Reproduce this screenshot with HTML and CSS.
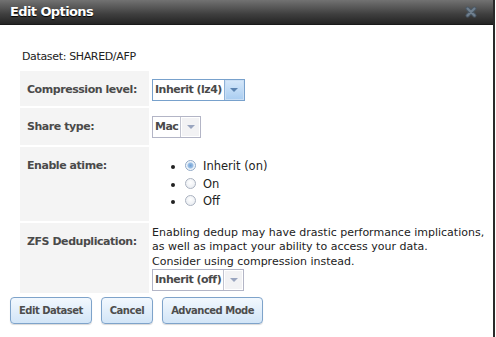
FILE: index.html
```html
<!DOCTYPE html>
<html lang="en">

<head>
  <meta charset="UTF-8">
  <meta name="viewport" content="width=device-width, initial-scale=1.0">
  <title>Edit Options</title>
  <link rel="stylesheet" href="styles.css">
</head>

<body>
  <div class="dialog">
    <div class="titlebar">
      <span class="title">Edit Options</span>
      <span class="close">
        <svg viewBox="0 0 14 14" width="14" height="14" xmlns="http://www.w3.org/2000/svg">
          <path d="M3.5 3.5 L10.5 10.5 M10.5 3.5 L3.5 10.5" stroke="#4a5866" stroke-width="4" stroke-linecap="round" />
          <path d="M3.5 3.5 L10.5 10.5 M10.5 3.5 L3.5 10.5" stroke="#71808f" stroke-width="2" stroke-linecap="round" />
        </svg>
      </span>
    </div>

    <div class="content">
      <div class="dataset">Dataset: SHARED/AFP</div>

      <div class="form">
        <div class="label">Compression level:</div>
        <div class="value row-select">
          <div class="select focused">
            <span class="select-text">Inherit (lz4)</span>
            <span class="select-arrow"></span>
          </div>
        </div>

        <div class="label">Share type:</div>
        <div class="value row-select">
          <div class="select">
            <span class="select-text">Mac</span>
            <span class="select-arrow"></span>
          </div>
        </div>

        <div class="label">Enable atime:</div>
        <div class="value">
          <ul class="radios">
            <li><span class="radio checked"></span>Inherit (on)</li>
            <li><span class="radio"></span>On</li>
            <li><span class="radio"></span>Off</li>
          </ul>
        </div>

        <div class="label">ZFS Deduplication:</div>
        <div class="value dedup">
          <p class="help">Enabling dedup may have drastic performance implications,<br>
            as well as impact your ability to access your data.<br>
            Consider using compression instead.</p>
          <div class="select">
            <span class="select-text">Inherit (off)</span>
            <span class="select-arrow"></span>
          </div>
        </div>
      </div>

      <div class="buttons">
        <button class="btn">Edit Dataset</button>
        <button class="btn">Cancel</button>
        <button class="btn">Advanced Mode</button>
      </div>
    </div>
  </div>
</body>

</html>
```

FILE: styles.css
```css
body {
  margin: 0;
  background: #fff;
  font-family: 'DejaVu Sans', Verdana, sans-serif;
  font-size: 11px;
  color: #222;
}

.dialog {
  width: 493px;
  height: 337px;
  border-right: 2px solid #2a2a2a;
  box-sizing: content-box;
}

.titlebar {
  height: 25px;
  display: flex;
  align-items: center;
  justify-content: space-between;
  padding: 0 15px 1px 10px;
  background: linear-gradient(#727272, #3e3e3e 60%, #242424);
  border-bottom: 1px solid #1a1a1a;
  box-sizing: border-box;
}

.title {
  color: #fff;
  font-weight: bold;
  font-size: 13px;
  letter-spacing: -0.6px;
  text-shadow: 0 1px 1px #000;
}

.close {
  display: flex;
}

.dataset {
  margin: 25px 0 0 22px;
  line-height: 14px;
  letter-spacing: -0.35px;
}

.form {
  display: grid;
  grid-template-columns: 129px 1fr;
  column-gap: 3px;
  row-gap: 2px;
  margin: 7px 0 0 20px;
}

.label {
  background: #f4f4f4;
  padding: 12px 7px 0;
  font-weight: bold;
  color: #4a4a4a;
  line-height: 14px;
  letter-spacing: -0.45px;
  white-space: nowrap;
}

.value.row-select {
  padding: 8px 0 5px;
}

.value.row-select + .label + .value.row-select {
  padding-bottom: 7px;
}

.value.dedup {
  padding-bottom: 2px;
}

.select {
  display: inline-flex;
  height: 22px;
  border: 1px solid #b3b5c6;
  box-sizing: border-box;
  background: #fff;
}

.select.focused {
  border-color: #78a1cc;
}

.select-text {
  padding: 0 2px;
  line-height: 20px;
  font-weight: bold;
  letter-spacing: -0.5px;
  color: #4a4a4a;
}

.select-arrow {
  width: 19px;
  border-left: 1px solid #c2c4d0;
  box-shadow: inset 0 0 0 1px #fff;
  background: #f2f2f4;
  display: flex;
  align-items: center;
  justify-content: center;
}

.select-arrow::after {
  content: "";
  border-left: 4px solid transparent;
  border-right: 4px solid transparent;
  border-top: 4px solid #9aa5bf;
}

.select.focused .select-arrow {
  border-left-color: #8fb3d9;
  background: linear-gradient(#d6e8fa, #a9cdf1);
  box-shadow: inset 0 0 0 1px #c9def4;
}

.select.focused .select-arrow::after {
  border-top-color: #5b83b0;
}

.radios {
  margin: 0;
  padding: 11px 0 10px 33px;
  list-style: disc;
  font-size: 11.5px;
}

.radios li {
  line-height: 17.5px;
}

.radio {
  display: inline-block;
  width: 11px;
  height: 11px;
  border: 1px solid #aab2c0;
  border-radius: 50%;
  background: radial-gradient(circle at 50% 40%, #fff, #e4e8ee);
  box-sizing: border-box;
  vertical-align: -1px;
  margin: 0 7px 0 0;
}

.radio.checked {
  border-color: #8fa8c6;
  background: radial-gradient(circle, #6f9fd3 0, #9cc0e6 2.5px, #e8f0f8 3.5px, #fff 5px);
}

.help {
  margin: 3px 0 0;
  line-height: 14.5px;
  white-space: nowrap;
}

.buttons {
  display: flex;
  gap: 9px;
  margin: 4px 0 0 10px;
}

.btn {
  height: 27px;
  padding: 0 8px;
  border: 1px solid #7ea3ca;
  border-radius: 4px;
  background: linear-gradient(#f2f8fe, #d2e5f7);
  font-family: inherit;
  font-size: 10px;
  font-weight: bold;
  letter-spacing: -0.5px;
  color: #4d4d4d;
  box-shadow: 0 1px 1px rgba(0, 0, 0, 0.15);
}
```
